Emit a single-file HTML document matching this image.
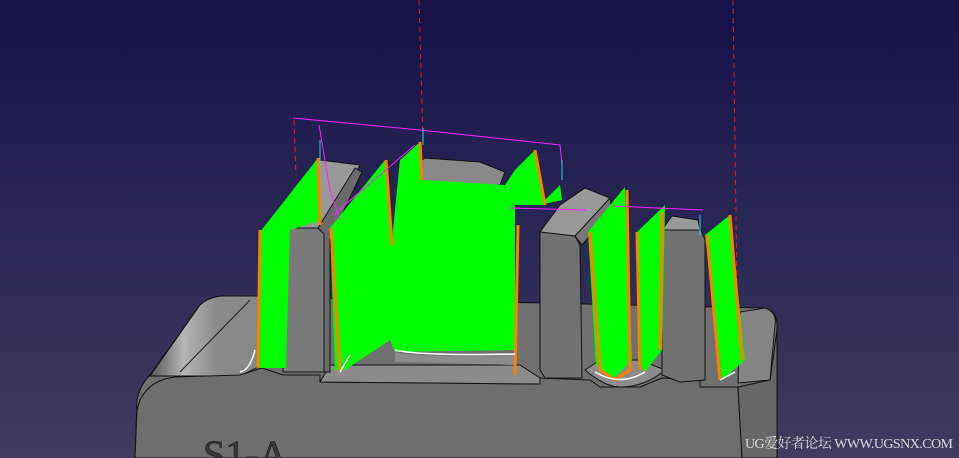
<!DOCTYPE html>
<html><head><meta charset="utf-8"><style>
html,body{margin:0;padding:0;width:959px;height:458px;overflow:hidden;background:#1a1848}
svg{display:block}
</style></head><body>
<svg width="959" height="458" viewBox="0 0 959 458" xmlns="http://www.w3.org/2000/svg">
<defs>
<linearGradient id="bg" x1="0" y1="0" x2="0" y2="1">
<stop offset="0" stop-color="#15124a"/><stop offset="1" stop-color="#3e3c60"/>
</linearGradient>
<linearGradient id="lt" x1="0" y1="0" x2="1" y2="0">
<stop offset="0" stop-color="#555"/><stop offset="0.3" stop-color="#b5b5b5"/><stop offset="0.6" stop-color="#8a8a8a"/><stop offset="1" stop-color="#888"/>
</linearGradient>
</defs>
<rect width="959" height="458" fill="url(#bg)"/>
<g stroke="#e02020" stroke-dasharray="5,4" stroke-width="1" fill="none">
<line x1="419" y1="0" x2="423" y2="140"/>
<line x1="733" y1="0" x2="738" y2="360"/>
<line x1="294" y1="120" x2="296" y2="175"/>
<line x1="510" y1="210" x2="515" y2="380"/>
<line x1="615" y1="210" x2="618" y2="375"/>
</g>
<path d="M137,400 Q140,385 150,375 L200,305 Q210,296 225,296 L765,308 Q777,312 777,325 L777,458 L135,458 Z" fill="#707070" stroke="#111"/>
<path d="M150,376 L200,305 Q210,296 225,296 L262,296 L262,365 L240,376 Z" fill="url(#lt)" stroke="#111"/>
<path d="M180,372 L250,300" stroke="#222" stroke-width="1"/>
<path d="M738,383 L740,312 L765,308 Q777,312 775,325 L770,380 Z" fill="#858585" stroke="#111"/>
<path d="M140,400 Q150,380 175,377 L240,375 L262,368 L283,375 L320,375 L320,382 L540,384 L540,378 L590,380 L600,387 L640,387 L662,378 L700,380 L700,387 L738,387 L742,458 L135,458 L137,410 Z" fill="#6e6e6e" stroke="#111"/>
<path d="M738,387 L770,380 L777,330 L777,458 L742,458 Z" fill="#676767" stroke="#111"/>
<path d="M320,382 L330,365 L520,365 L540,378 L540,384 Z" fill="#8c8c8c" stroke="#111"/>
<path d="M585,370 Q605,387 620,387 Q645,387 665,370 L640,360 L600,360 Z" fill="#8c8c8c" stroke="#111"/>
<path d="M415,165 L425,158 L480,162 L495,168 L505,172 L500,185 L420,185 L413,180 Z" fill="#888" stroke="#111"/>
<path d="M283,228 L320,160 L360,165 L325,232 Z" fill="#999" stroke="#111"/>
<path d="M283,228 L318,228 L324,234 L324,372 L283,372 Z" fill="#7a7a7a" stroke="#111"/>
<path d="M318,228 L355,168 L362,172 L330,240 L330,372 L324,372 L324,234 Z" fill="#6a6a6a" stroke="#111"/>
<path d="M540,232 L560,205 L585,188 L610,198 L575,238 Z" fill="#999" stroke="#111"/>
<path d="M540,232 L575,236 L580,245 L582,378 L545,378 L540,370 Z" fill="#727272" stroke="#111"/>
<path d="M575,236 L610,198 L612,210 L582,245 Z" fill="#777" stroke="#111"/>
<path d="M662,230 L675,225 L700,228 L705,240 L705,380 L680,382 L662,375 Z" fill="#727272" stroke="#111"/>
<path d="M662,230 L672,216 L698,220 L700,230 Z" fill="#999" stroke="#111"/>
<g fill="#00ff00">
<path d="M260,232 L318,158 L322,220 L290,230 L286,368 L258,368 Z"/>
<path d="M330,228 L385,160 L392,240 L400,160 L420,142 L422,180 L505,185 L515,170 L535,150 L545,205 L515,205 L515,350 L395,352 L390,340 L345,370 L335,370 Z"/>
<path d="M540,205 L560,185 L562,200 Z"/>
<path d="M588,232 L625,187 L632,360 L612,380 L596,365 Z"/>
<path d="M637,232 L665,205 L662,350 L645,372 L638,360 Z"/>
<path d="M705,235 L730,215 L745,360 L722,380 Z"/>
</g>
<path d="M395,352 Q420,358 515,355 L515,365 L395,362 Z" fill="#8c8c8c"/>
<g stroke="#ff7f00" stroke-width="3" fill="none">
<path d="M260,230 L258,368"/><path d="M318,158 L320,225"/>
<path d="M331,228 L340,372"/><path d="M386,160 L392,245"/>
<path d="M420,142 L422,180"/><path d="M535,150 L545,205"/>
<path d="M518,225 L515,375"/>
<path d="M590,232 L600,370 L615,380 L630,370 L627,190"/>
<path d="M637,232 L640,370"/><path d="M662,212 L660,350"/>
<path d="M707,235 L720,380"/><path d="M730,215 L742,360"/>
</g>
<g stroke="#ff22ff" stroke-width="1" fill="none">
<path d="M293,118 L420,130 L560,145 L562,165"/>
<path d="M319,125 L330,190 L340,220"/>
<path d="M333,215 L415,145"/>
<path d="M510,208 L586,210"/>
<path d="M612,206 L703,210"/>
</g>
<g stroke="#22dddd" stroke-width="1">
<line x1="320" y1="140" x2="320" y2="165"/><line x1="423" y1="128" x2="423" y2="145"/>
<line x1="562" y1="160" x2="562" y2="180"/><line x1="700" y1="215" x2="700" y2="235"/>
</g>
<g stroke="#fff" stroke-width="1.5" fill="none">
<path d="M240,372 Q250,370 255,350"/><path d="M595,372 Q620,387 645,372"/>
<path d="M340,372 L350,355"/><path d="M720,380 L735,372"/>
<path d="M395,350 Q420,356 515,354"/>
</g>
<text x="203" y="468" font-family="Liberation Serif,serif" font-size="40" fill="#3a3a3a" stroke="#111" stroke-width="0.6">S1-A</text>
<text x="745" y="448" font-family="Liberation Serif,'Noto Serif CJK SC',serif" font-size="14" fill="#dcdcdc" textLength="208">UG爱好者论坛 WWW.UGSNX.COM</text>
</svg>
</body></html>
